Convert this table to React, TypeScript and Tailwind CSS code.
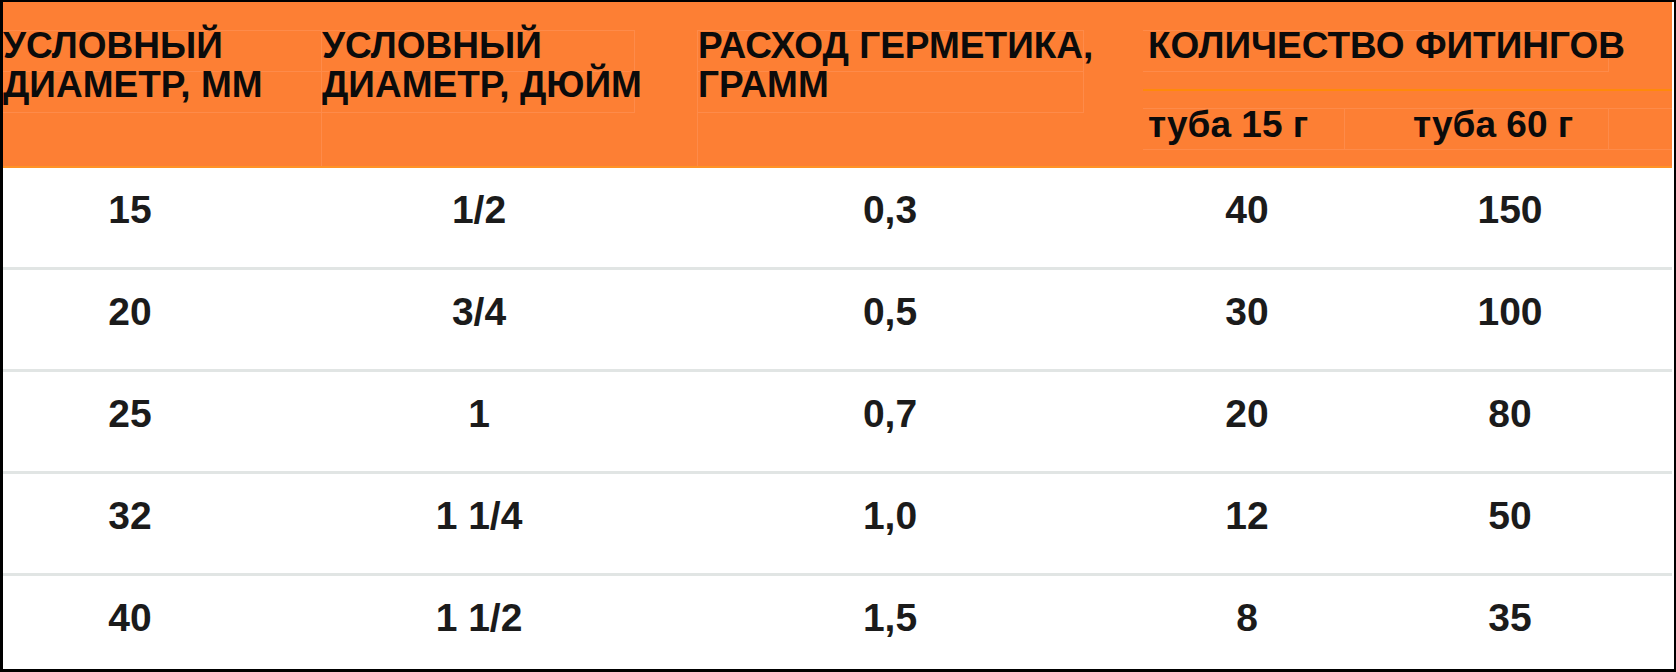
const rows = [
  ["15", "1/2", "0,3", "40", "150"],
  ["20", "3/4", "0,5", "30", "100"],
  ["25", "1", "0,7", "20", "80"],
  ["32", "1 1/4", "1,0", "12", "50"],
  ["40", "1 1/2", "1,5", "8", "35"],
];

const font = { fontFamily: '"Liberation Sans", Arial, sans-serif' };

export default function App() {
  return (
    <div
      className="w-[1676px] h-[672px] bg-white border-t-2 border-l-[3px] border-r-2 border-b-[3px] border-black overflow-hidden"
      style={font}
    >
      <div className="h-[166px] mr-[2px] bg-[#fd7f34] border-b-2 border-[#ff9326] pt-[28px] grid grid-cols-[318px_376px_446px_1fr] text-[37px] font-bold text-[#0b0b0b]">
        <div>
          <div className="h-[42px] border-y border-[#fe8b4a] leading-[30px] whitespace-nowrap">УСЛОВНЫЙ</div>
          <div className="h-[41px] border-b border-[#fe8b4a] leading-[26px] whitespace-nowrap">ДИАМЕТР, ММ</div>
        </div>
        <div className="border-l border-[#fe8b4a]">
          <div className="w-[313px] border-r border-[#fe8b4a]">
            <div className="h-[42px] border-y border-[#fe8b4a] leading-[30px] whitespace-nowrap">УСЛОВНЫЙ</div>
            <div className="h-[41px] border-b border-[#fe8b4a] leading-[26px] whitespace-nowrap">ДИАМЕТР, ДЮЙМ</div>
          </div>
        </div>
        <div className="border-l border-[#fe8b4a]">
          <div className="w-[386px] border-r border-[#fe8b4a]">
            <div className="h-[42px] border-y border-[#fe8b4a] leading-[30px] whitespace-nowrap">РАСХОД ГЕРМЕТИКА,</div>
            <div className="h-[41px] border-b border-[#fe8b4a] leading-[26px] whitespace-nowrap">ГРАММ</div>
          </div>
        </div>
        <div>
          <div className="w-[466px] h-[42px] border-y border-r border-[#fe8b4a] pl-[5px] leading-[30px] whitespace-nowrap">
            КОЛИЧЕСТВО ФИТИНГОВ
          </div>
          <div className="mt-[17px] h-[2px] bg-[#ff8a0a]" />
          <div className="mt-[17px] h-[42px] flex border-y border-[#fe8b4a] leading-[32px] whitespace-nowrap">
            <div className="w-[202px] border-r border-[#fe8b4a] pl-[5px]">туба 15 г</div>
            <div className="w-[264px] border-r border-[#fe8b4a] pl-[68px]">туба 60 г</div>
          </div>
        </div>
      </div>

      <div className="mr-[2px]">
        {rows.map((r, i) => (
          <div
            key={r[0]}
            className={`grid grid-cols-[254px_444px_378px_336px_190px_1fr] pt-[22px] text-[39px] leading-[40px] font-bold text-[#1b1b1b] ${
              i < rows.length - 1 ? "h-[102px] border-b-[3px] border-[#e1e5e4]" : "h-[93px]"
            }`}
          >
            {r.map((v, j) => (
              <div key={j} className="text-center whitespace-nowrap">
                {v}
              </div>
            ))}
            <div />
          </div>
        ))}
      </div>
    </div>
  );
}
